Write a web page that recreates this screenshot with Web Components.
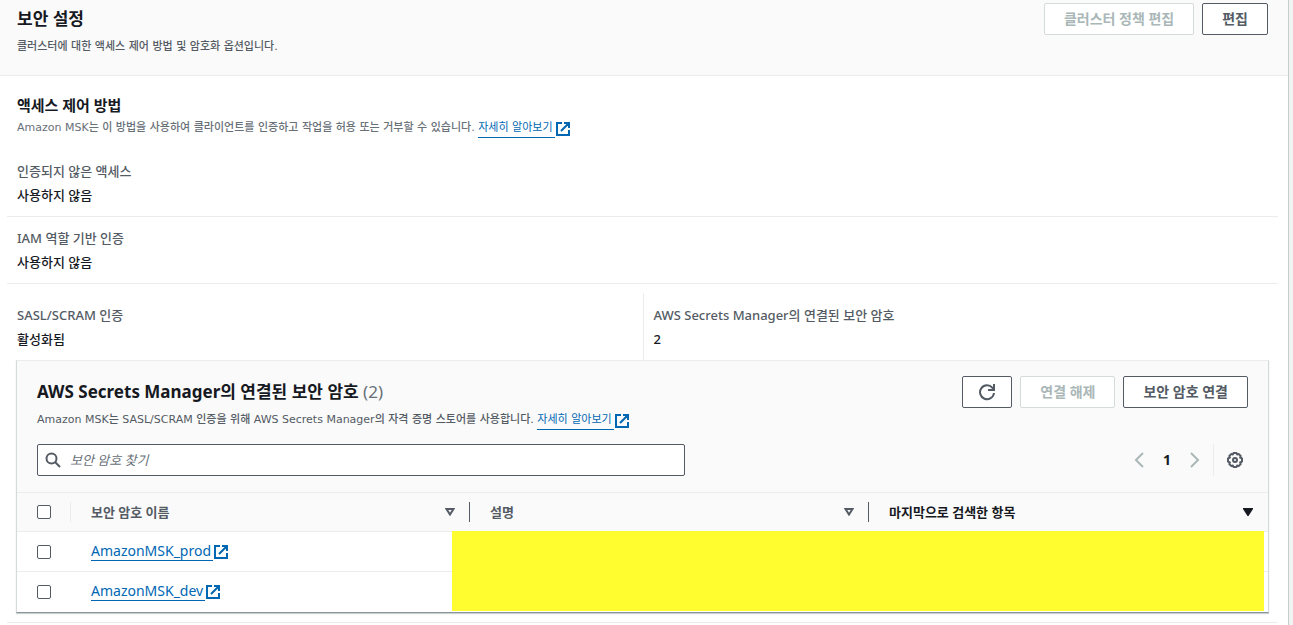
<!DOCTYPE html>
<html lang="ko">
<head>
<meta charset="utf-8">
<title>보안 설정</title>
<style>
  html { background: #f2f3f3; }
  body {
    display: flex;
    flex-direction: column;
    min-height: 100vh;
    margin: 0;
    color: #16191f;
    font-family: "Noto Sans", "Noto Sans CJK KR", sans-serif;
    font-size: 13px;
    font-weight: 500;
    line-height: 24px;
  }
  security-panel { flex: 1; }
</style>
</head>
<body>
<security-panel></security-panel>

<script>
function attach(el, html) {
  const template = document.createElement('template');
  template.innerHTML = html;
  el.attachShadow({ mode: 'open' });
  el.shadowRoot.appendChild(template.content.cloneNode(true));
}

class ConsoleButton extends HTMLElement {
  constructor() {
    super();
    attach(this, `
      <style>
        :host { display: block; }
        button {
          display: flex;
          align-items: center;
          justify-content: center;
          box-sizing: border-box;
          height: 32px;
          padding: 0 19px;
          border: 1px solid #545b64;
          border-radius: 2px;
          background: #fff;
          color: #545b64;
          font: bold 14px/22px "Noto Sans", "Noto Sans CJK KR", sans-serif;
          white-space: nowrap;
          cursor: pointer;
        }
        button:hover { background: #fafafa; }
        button:disabled {
          border-color: #d5dbdb;
          color: #aab7b8;
          cursor: default;
        }
        :host([icon]) button { width: 50px; padding: 0; }
      </style>
      <button type="button"><slot></slot></button>
    `);
  }

  connectedCallback() {
    const button = this.shadowRoot.querySelector('button');
    button.disabled = this.hasAttribute('disabled');
    if (this.hasAttribute('label')) {
      button.setAttribute('aria-label', this.getAttribute('label'));
    }
  }
}

class ExternalLink extends HTMLElement {
  constructor() {
    super();
    attach(this, `
      <style>
        :host { display: inline-block; line-height: 18px; font-weight: normal; }
        a {
          display: flex;
          align-items: center;
          gap: 1px;
          color: #0067b3;
          text-decoration: none;
        }
        span {
          padding-right: 2px;
          border-bottom: 1px solid #0067b3;
        }
        svg { display: block; }
      </style>
      <a href="#">
        <span><slot></slot></span>
        <svg width="14" height="14" viewBox="0 0 14 14" fill="none" stroke="#0067b3" stroke-width="2">
          <path d="M6 1H1v12h12V8M8 1h5v5M13 1L5 9"/>
        </svg>
      </a>
    `);
  }
}

class KeyValue extends HTMLElement {
  constructor() {
    super();
    attach(this, `
      <style>
        :host { display: block; padding: 0 10px; }
        .label { color: #545b64; }
        .value { color: #16191f; }
      </style>
      <div class="label"><slot name="label"></slot></div>
      <div class="value"><slot></slot></div>
    `);
  }
}

class SecretsTable extends HTMLElement {
  constructor() {
    super();
    attach(this, `
      <style>
        :host { display: block; position: relative; padding-bottom: 1px; }
        table {
          width: 100%;
          table-layout: fixed;
          border-collapse: separate;
          border-spacing: 0;
        }
        th, td {
          box-sizing: border-box;
          padding: 0 0 0 20px;
          text-align: left;
          border-top: 1px solid #eaeded;
        }
        th {
          height: 39px;
          background: #fafafa;
          color: #545b64;
        }
        td { height: 40px; }
        .pick { width: 54px; }
        .head {
          display: flex;
          align-items: center;
          justify-content: space-between;
          height: 20px;
          padding-right: 14px;
          border-right: 1px solid #545b64;
        }
        .pick .head { border-color: #eaeded; }
        th:last-child .head { border-color: transparent; }
        .sorted { color: #16191f; }
        input {
          display: block;
          appearance: none;
          box-sizing: border-box;
          width: 14px;
          height: 14px;
          margin: 0;
          border: 1px solid #545b64;
          border-radius: 2px;
          background: #fff;
        }
        input:checked { background: #0067b3; }
        external-link { display: block; width: max-content; font-size: 14px; }
        svg { display: block; }
        /* covers the description and date cells */
        .mask {
          position: absolute;
          top: 39px;
          right: 4px;
          bottom: 1px;
          left: calc((100% - 54px) / 3 + 36px);
          background: #fffd30;
        }
      </style>
      <table>
        <thead>
          <tr>
            <th class="pick"><div class="head"><input type="checkbox" aria-label="모두 선택"></div></th>
            <th><div class="head">보안 암호 이름
              <svg width="10" height="8" viewBox="0 0 10 8" fill="none" stroke="#545b64" stroke-width="2"><path d="M1.500 1h7L5 6.500z"/></svg></div></th>
            <th><div class="head">설명
              <svg width="10" height="8" viewBox="0 0 10 8" fill="none" stroke="#545b64" stroke-width="2"><path d="M1.500 1h7L5 6.500z"/></svg></div></th>
            <th class="sorted"><div class="head">마지막으로 검색한 항목
              <svg width="10" height="8" viewBox="0 0 10 8"><path fill="#16191f" d="M0 0h10v1L5.500 8h-1L0 1z"/></svg></div></th>
          </tr>
        </thead>
        <tbody>
          <tr>
            <td><input type="checkbox" aria-label="AmazonMSK_prod"></td>
            <td><external-link>AmazonMSK_prod</external-link></td>
            <td></td>
            <td></td>
          </tr>
          <tr>
            <td><input type="checkbox" aria-label="AmazonMSK_dev"></td>
            <td><external-link>AmazonMSK_dev</external-link></td>
            <td></td>
            <td></td>
          </tr>
        </tbody>
      </table>
      <div class="mask"></div>
    `);
  }
}

class TablePager extends HTMLElement {
  constructor() {
    super();
    attach(this, `
      <style>
        :host { display: flex; align-items: center; height: 32px; }
        button {
          display: flex;
          align-items: center;
          justify-content: center;
          width: 28px;
          height: 24px;
          padding: 0;
          border: 0;
          background: none;
          color: #16191f;
          font: bold 14px/24px "Noto Sans", sans-serif;
        }
        .settings {
          box-sizing: border-box;
          width: 35px;
          height: 32px;
          margin-left: 4px;
          padding-left: 8px;
          border-left: 1px solid #eaeded;
        }
        svg { display: block; }
      </style>
      <button type="button" aria-label="이전 페이지" disabled>
        <svg width="10" height="16" viewBox="0 0 10 16" fill="none" stroke="#aab7b8" stroke-width="2"><path d="M9 1L2 8l7 7"/></svg>
      </button>
      <button type="button" aria-current="page">1</button>
      <button type="button" aria-label="다음 페이지" disabled>
        <svg width="10" height="16" viewBox="0 0 10 16" fill="none" stroke="#aab7b8" stroke-width="2"><path d="M1 1l7 7-7 7"/></svg>
      </button>
      <button type="button" class="settings" aria-label="기본 설정">
        <svg width="16" height="16" viewBox="0 0 16 16" fill="none" stroke="#545b64" stroke-width="2" stroke-linejoin="round">
          <path d="M6.500 1h3l.6 1.500 1.500-.6 2.100 2.100-.6 1.500 1.900.9v3.200l-1.900.9.6 1.500-2.100 2.100-1.500-.6-.6 1.500h-3l-.6-1.500-1.500.6L2.300 12l.6-1.500L1 9.600V6.400l1.900-.9L2.300 4l2.100-2.100 1.500.6z"/>
          <circle cx="8" cy="8" r="2"/>
        </svg>
      </button>
    `);
  }
}

class SecretsPanel extends HTMLElement {
  constructor() {
    super();
    attach(this, `
      <style>
        :host {
          display: block;
          border: 1px solid #d5dbdb;
          border-top-color: #eaeded;
          border-bottom-color: #879596;
          background: #fff;
          box-shadow: 0 1px 1px rgba(0, 28, 36, 0.2);
        }
        header { padding: 15px 20px 16px; background: #fafafa; }
        .row {
          display: flex;
          align-items: center;
          justify-content: space-between;
        }
        .buttons { display: flex; gap: 8px; }
        h2 { margin: 0; font-size: 17px; line-height: 32px; }
        .count { color: #687078; font-weight: normal; }
        p {
          margin: 0;
          color: #545b64;
          font-family: "DejaVu Sans", "Noto Sans CJK KR", sans-serif;
          font-size: 11px;
          line-height: 24px;
        }
        .tools { margin-top: 12px; }
        .search {
          display: flex;
          align-items: center;
          gap: 9px;
          box-sizing: border-box;
          width: 54%;
          max-width: 648px;
          height: 32px;
          padding: 0 7px;
          border: 1px solid #545b64;
          border-radius: 2px;
          background: #fff;
        }
        input {
          flex: 1;
          min-width: 0;
          padding: 0;
          border: 0;
          outline: 0;
          background: none;
          color: #16191f;
          font: 13px/22px "Noto Sans", "Noto Sans CJK KR", sans-serif;
        }
        input::placeholder { color: #687078; font-style: italic; }
        svg { display: block; }
      </style>
      <header>
        <div class="row">
          <h2>AWS Secrets Manager의 연결된 보안 암호 <span class="count">(2)</span></h2>
          <div class="buttons">
            <console-button icon label="새로 고침">
              <svg width="18" height="18" viewBox="0 0 18 18" fill="none" stroke="#545b64" stroke-width="2">
                <path d="M16 10a7 7 0 1 1-1.500-5.200L16 6.500M16 1v6h-6"/>
              </svg>
            </console-button>
            <console-button disabled>연결 해제</console-button>
            <console-button>보안 암호 연결</console-button>
          </div>
        </div>
        <p>Amazon MSK는 SASL/SCRAM 인증을 위해 AWS Secrets Manager의 자격 증명 스토어를 사용합니다. <external-link>자세히 알아보기</external-link></p>
        <div class="row tools">
          <label class="search">
            <svg width="16" height="16" viewBox="0 0 16 16" fill="none" stroke="#545b64" stroke-width="2">
              <circle cx="6.500" cy="6.500" r="5"/><path d="M10 10l5 5"/>
            </svg>
            <input type="text" placeholder="보안 암호 찾기" aria-label="보안 암호 찾기">
          </label>
          <table-pager></table-pager>
        </div>
      </header>
      <secrets-table></secrets-table>
    `);
  }
}

class SecurityPanel extends HTMLElement {
  constructor() {
    super();
    attach(this, `
      <style>
        :host {
          display: block;
          margin-right: 4px;
          border-right: 1px solid #c5cdce;
          background: #fff;
        }
        .top {
          display: flex;
          align-items: flex-start;
          justify-content: space-between;
          padding: 3px 20px 16px 17px;
          border-bottom: 1px solid #eaeded;
          background: #fafafa;
        }
        .buttons { display: flex; gap: 8px; }
        h2 { margin: 0; font-size: 17px; line-height: 32px; }
        h3 { margin: 0; font-size: 15px; line-height: 24px; }
        p {
          margin: 0;
          color: #545b64;
          font-family: "DejaVu Sans", "Noto Sans CJK KR", sans-serif;
          font-size: 11px;
          line-height: 24px;
        }
        .intro { padding: 17px 17px 11px; }
        .intro p { line-height: 22px; color: #687078; }
        .section {
          margin: 0 10px 0 7px;
          padding: 9px 0;
          border-bottom: 1px solid #eaeded;
        }
        .columns { display: grid; grid-template-columns: 1fr 1fr; }
        .columns key-value { padding-top: 10px; padding-bottom: 9px; }
        .columns key-value + key-value { border-left: 1px solid #eaeded; }
        secrets-panel { margin: 0 9px; }
      </style>
      <div class="top">
        <div>
          <h2>보안 설정</h2>
          <p>클러스터에 대한 액세스 제어 방법 및 암호화 옵션입니다.</p>
        </div>
        <div class="buttons">
          <console-button disabled>클러스터 정책 편집</console-button>
          <console-button>편집</console-button>
        </div>
      </div>
      <div class="intro">
        <h3>액세스 제어 방법</h3>
        <p>Amazon MSK는 이 방법을 사용하여 클라이언트를 인증하고 작업을 허용 또는 거부할 수 있습니다. <external-link>자세히 알아보기</external-link></p>
      </div>
      <div class="section">
        <key-value><span slot="label">인증되지 않은 액세스</span>사용하지 않음</key-value>
      </div>
      <div class="section">
        <key-value><span slot="label">IAM 역할 기반 인증</span>사용하지 않음</key-value>
      </div>
      <div class="section">
        <div class="columns">
          <key-value><span slot="label">SASL/SCRAM 인증</span>활성화됨</key-value>
          <key-value><span slot="label">AWS Secrets Manager의 연결된 보안 암호</span>2</key-value>
        </div>
        <secrets-panel></secrets-panel>
      </div>
    `);
  }
}

customElements.define('console-button', ConsoleButton);
customElements.define('external-link', ExternalLink);
customElements.define('key-value', KeyValue);
customElements.define('secrets-table', SecretsTable);
customElements.define('table-pager', TablePager);
customElements.define('secrets-panel', SecretsPanel);
customElements.define('security-panel', SecurityPanel);
</script>
</body>
</html>
